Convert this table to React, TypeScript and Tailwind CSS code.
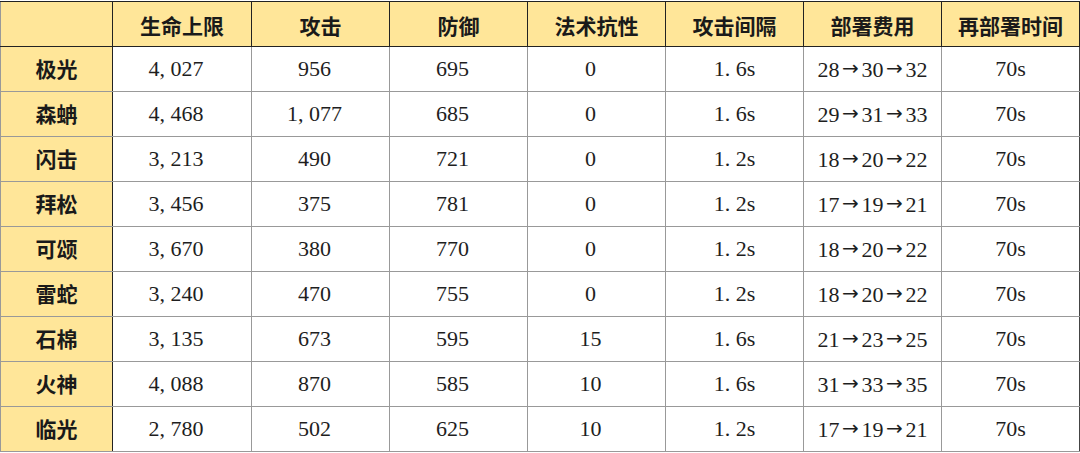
const HEADERS = ["生命上限", "攻击", "防御", "法术抗性", "攻击间隔", "部署费用", "再部署时间"];

const ROWS: [string, string, string, string, string, string, string, string][] = [
  ["极光", "4,027", "956", "695", "0", "1.6s", "28→30→32", "70s"],
  ["森蚺", "4,468", "1,077", "685", "0", "1.6s", "29→31→33", "70s"],
  ["闪击", "3,213", "490", "721", "0", "1.2s", "18→20→22", "70s"],
  ["拜松", "3,456", "375", "781", "0", "1.2s", "17→19→21", "70s"],
  ["可颂", "3,670", "380", "770", "0", "1.2s", "18→20→22", "70s"],
  ["雷蛇", "3,240", "470", "755", "0", "1.2s", "18→20→22", "70s"],
  ["石棉", "3,135", "673", "595", "15", "1.6s", "21→23→25", "70s"],
  ["火神", "4,088", "870", "585", "10", "1.6s", "31→33→35", "70s"],
  ["临光", "2,780", "502", "625", "10", "1.2s", "17→19→21", "70s"],
];

// SimSun-style half-width punctuation: give "," and "." a full digit width
function Num({ text }: { text: string }) {
  const parts = text.split(/([,.→])/);
  return (
    <>
      {parts.map((p, i) =>
        p === "," || p === "." ? (
          <span key={i} className="inline-block w-[11px] text-left">
            {p}
          </span>
        ) : p === "→" ? (
          <span
            key={i}
            className="inline-block w-[22px] text-center align-[2px] font-['DejaVu_Sans',sans-serif] text-[20px] leading-none"
          >
            {p}
          </span>
        ) : (
          <span key={i}>{p}</span>
        )
      )}
    </>
  );
}

export default function App() {
  return (
    <div className="h-[453px] w-[1080px] overflow-hidden bg-white pt-px font-['Liberation_Serif','Noto_Sans_CJK_SC',serif] text-[#1e1e1e]">
      <table className="w-[1079px] table-fixed border-collapse">
        <colgroup>
          <col className="w-[112px]" />
          <col className="w-[139px]" />
          <col className="w-[138px]" />
          <col className="w-[138px]" />
          <col className="w-[138px]" />
          <col className="w-[138px]" />
          <col className="w-[138px]" />
          <col className="w-[138px]" />
        </colgroup>
        <thead>
          <tr className="h-[45px]">
            <th className="border border-l-[#999] border-[#222] bg-[#ffe699]" />
            {HEADERS.map((h) => (
              <th
                key={h}
                className="border border-[#222] bg-[#ffe699] pt-[3px] text-center font-['Noto_Sans_CJK_SC',sans-serif] text-[21px] font-bold text-[#1a1a1a]"
              >
                {h}
              </th>
            ))}
          </tr>
        </thead>
        <tbody>
          {ROWS.map((r) => (
            <tr key={r[0]} className="h-[45px]">
              <td className="border border-r-[#222] border-l-[#999] border-y-[#999] bg-[#ffe699] text-center font-['Noto_Sans_CJK_SC',sans-serif] text-[21px] font-bold text-[#1a1a1a]">
                {r[0]}
              </td>
              {r.slice(1, 5).map((v, i) => (
                <td key={i} className="border border-[#999] pr-3 text-center text-[22px] leading-none">
                  <Num text={v} />
                </td>
              ))}
              {r.slice(5, 7).map((v, i) => (
                <td key={i} className="border border-[#999] text-center text-[22px] leading-none">
                  <Num text={v} />
                </td>
              ))}
              <td className="border border-r-[#444] border-[#999] text-center text-[22px] leading-none">
                {r[7]}
              </td>
            </tr>
          ))}
        </tbody>
      </table>
    </div>
  );
}
